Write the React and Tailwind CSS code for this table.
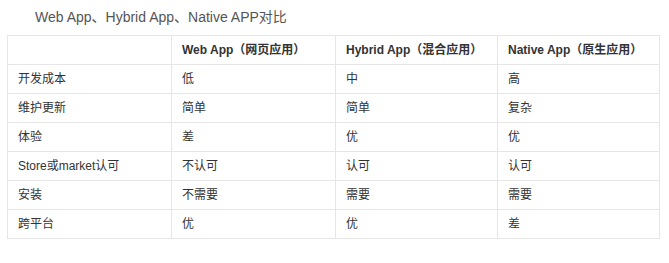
const headers = ["", "Web App（网页应用）", "Hybrid App（混合应用）", "Native App（原生应用）"];

const rows = [
  ["开发成本", "低", "中", "高"],
  ["维护更新", "简单", "简单", "复杂"],
  ["体验", "差", "优", "优"],
  ["Store或market认可", "不认可", "认可", "认可"],
  ["安装", "不需要", "需要", "需要"],
  ["跨平台", "优", "优", "差"],
];

const widths = ["w-[164px]", "w-[164px]", "w-[162px]", "w-[162px]"];

export default function App() {
  return (
    <div
      className="w-[669px] h-[263px] bg-white text-[#333]"
      style={{ fontFamily: '"Liberation Sans", Arial, "Noto Sans CJK SC", sans-serif' }}
    >
      <div className="h-[35px] pl-[35px] flex items-center text-[14px] text-[#555]">
        Web App、Hybrid App、Native APP对比
      </div>
      <table className="ml-[7px] border-collapse table-fixed w-[652px] text-[12px]">
        <thead>
          <tr className="h-[29px]">
            {headers.map((h, i) => (
              <th
                key={i}
                className={`${widths[i]} border border-[#e6e6e6] px-[10px] text-left font-bold`}
              >
                {h}
              </th>
            ))}
          </tr>
        </thead>
        <tbody>
          {rows.map((r, ri) => (
            <tr key={ri} className="h-[29px]">
              {r.map((c, ci) => (
                <td key={ci} className="border border-[#e6e6e6] px-[10px]">
                  {c}
                </td>
              ))}
            </tr>
          ))}
        </tbody>
      </table>
    </div>
  );
}
